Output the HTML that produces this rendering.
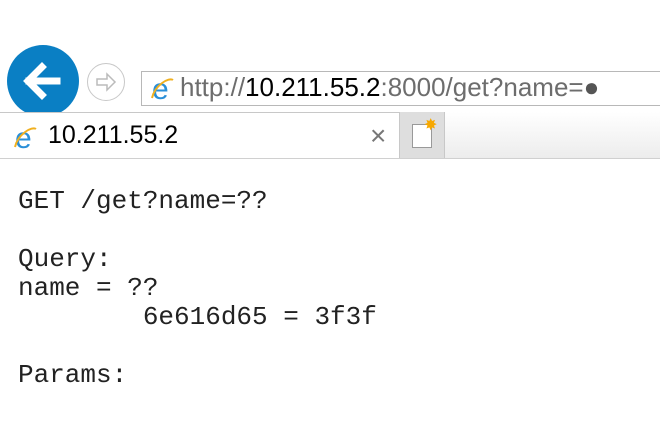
<!DOCTYPE html>
<html><head><style>
body{margin:0;width:660px;height:422px;background:#fff;position:relative;overflow:hidden;font-family:"Liberation Sans",sans-serif}
.back{position:absolute;left:7px;top:45px;width:72px;height:72px;border-radius:50%;background:#0a7fc4;}
.fwd{position:absolute;left:87px;top:63px;width:38px;height:38px;border-radius:50%;border:1px solid #c8c8c8;background:#fff;box-sizing:border-box}
.addr{position:absolute;left:141px;top:71px;width:530px;height:35px;border:1px solid #b8b8b8;box-sizing:border-box;background:#fff}
.addr span.t{position:absolute;left:38px;top:0px;font-size:26px;color:#6d6d6d;white-space:nowrap}
.tab{position:absolute;left:0;top:112px;width:400px;height:47px;border:1px solid #c8c8c8;border-bottom:none;border-left:none;box-sizing:border-box;background:#fff}
.newtab{position:absolute;left:400px;top:112px;width:45px;height:47px;background:#dedede;border-right:1px solid #c8c8c8;box-sizing:border-box}
.strip{position:absolute;left:445px;top:112px;width:215px;height:47px;background:linear-gradient(#fff,#ececec)}
.line{position:absolute;left:0;top:158px;width:660px;height:1px;background:#d0d0d0}
pre{position:absolute;left:18px;top:187px;margin:0;font-family:"Liberation Mono",monospace;font-size:26px;line-height:29px;color:#222}
</style></head><body>
<div class="back"><svg width="72" height="72" viewBox="0 0 72 72"><path d="M50 36H22M35 22L21 36L35 50" stroke="#fff" stroke-width="7" fill="none" stroke-linecap="square"/></svg></div>
<div class="fwd"><svg width="36" height="36" viewBox="0 0 36 36"><path d="M9 15h10v-5l8 8-8 8v-5H9z" stroke="#bbb" stroke-width="1.5" fill="none"/></svg></div>
<div class="addr">
<svg style="position:absolute;left:7px;top:3px" width="28" height="28" viewBox="0 0 28 28"><text x="3" y="24" font-size="30" font-family="Liberation Sans" fill="#2a8fd8">e</text><path d="M3 23C6 10 20 2 24 5" stroke="#f0b020" stroke-width="2" fill="none"/></svg>
<span class="t">http://<span style="color:#000">10.211.55.2</span>:8000/get?name=<span style="color:#555">&#x25CF;</span></span></div>
<div class="tab">
<svg style="position:absolute;left:12px;top:11px" width="28" height="28" viewBox="0 0 28 28"><text x="3" y="24" font-size="30" font-family="Liberation Sans" fill="#2a8fd8">e</text><path d="M3 23C6 10 20 2 24 5" stroke="#f0b020" stroke-width="2" fill="none"/></svg>
<span style="position:absolute;left:48px;top:8px;font-size:25px;color:#000">10.211.55.2</span>
<span style="position:absolute;left:370px;top:7px;font-size:28px;color:#777">×</span></div>
<div class="newtab"><div style="position:absolute;left:12px;top:12px;width:20px;height:24px;background:#fff;border:1px solid #999;box-sizing:border-box"></div><span style="position:absolute;left:24px;top:3px;color:#f7a800;font-size:16px">✸</span></div>
<div class="strip"></div>
<div class="line"></div>
<pre>GET /get?name=??

Query:
name = ??
        6e616d65 = 3f3f

Params:</pre>
</body></html>
